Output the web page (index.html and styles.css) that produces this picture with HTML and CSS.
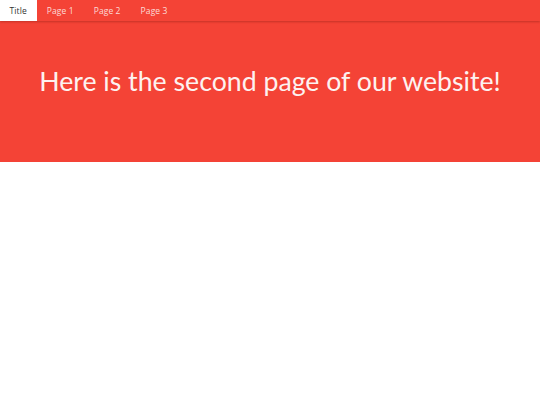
FILE: index.html
```html
<!DOCTYPE html>
<html>
<head>
<meta charset="utf-8">
<link rel="stylesheet" href="styles.css">
</head>
<body>
<nav class="nav">
  <a class="tab active">Title</a>
  <a class="tab">Page 1</a>
  <a class="tab">Page 2</a>
  <a class="tab">Page 3</a>
</nav>
<header class="hero">
  <h1 class="hero-title">Here is the second page of our website!</h1>
</header>
</body>
</html>
```

FILE: styles.css
```css
html, body {
  margin: 0;
  padding: 0;
  background: #ffffff;
}
.nav {
  display: flex;
  height: 21px;
  background: #f44336;
  box-shadow: 0 1px 2px rgba(110, 20, 10, 0.35);
  position: relative;
  z-index: 1;
}
.tab {
  display: flex;
  align-items: center;
  padding: 0 10px;
  font-family: "Open Sans", "Liberation Sans", sans-serif;
  font-size: 8.5px;
  color: #fcdcd8;
  letter-spacing: 0.1px;
}
.tab.active {
  background: #ffffff;
  color: #333333;
  padding: 0 10px 0 9.5px;
}
.hero {
  background: #f44336;
  height: 141px;
  display: flex;
  justify-content: center;
  padding-top: 44px;
  box-sizing: border-box;
}
.hero-title {
  margin: 0;
  font-family: Lato, "Liberation Sans", sans-serif;
  font-weight: 400;
  font-size: 26.7px;
  line-height: 32px;
  color: #fdf2f0;
}
```
